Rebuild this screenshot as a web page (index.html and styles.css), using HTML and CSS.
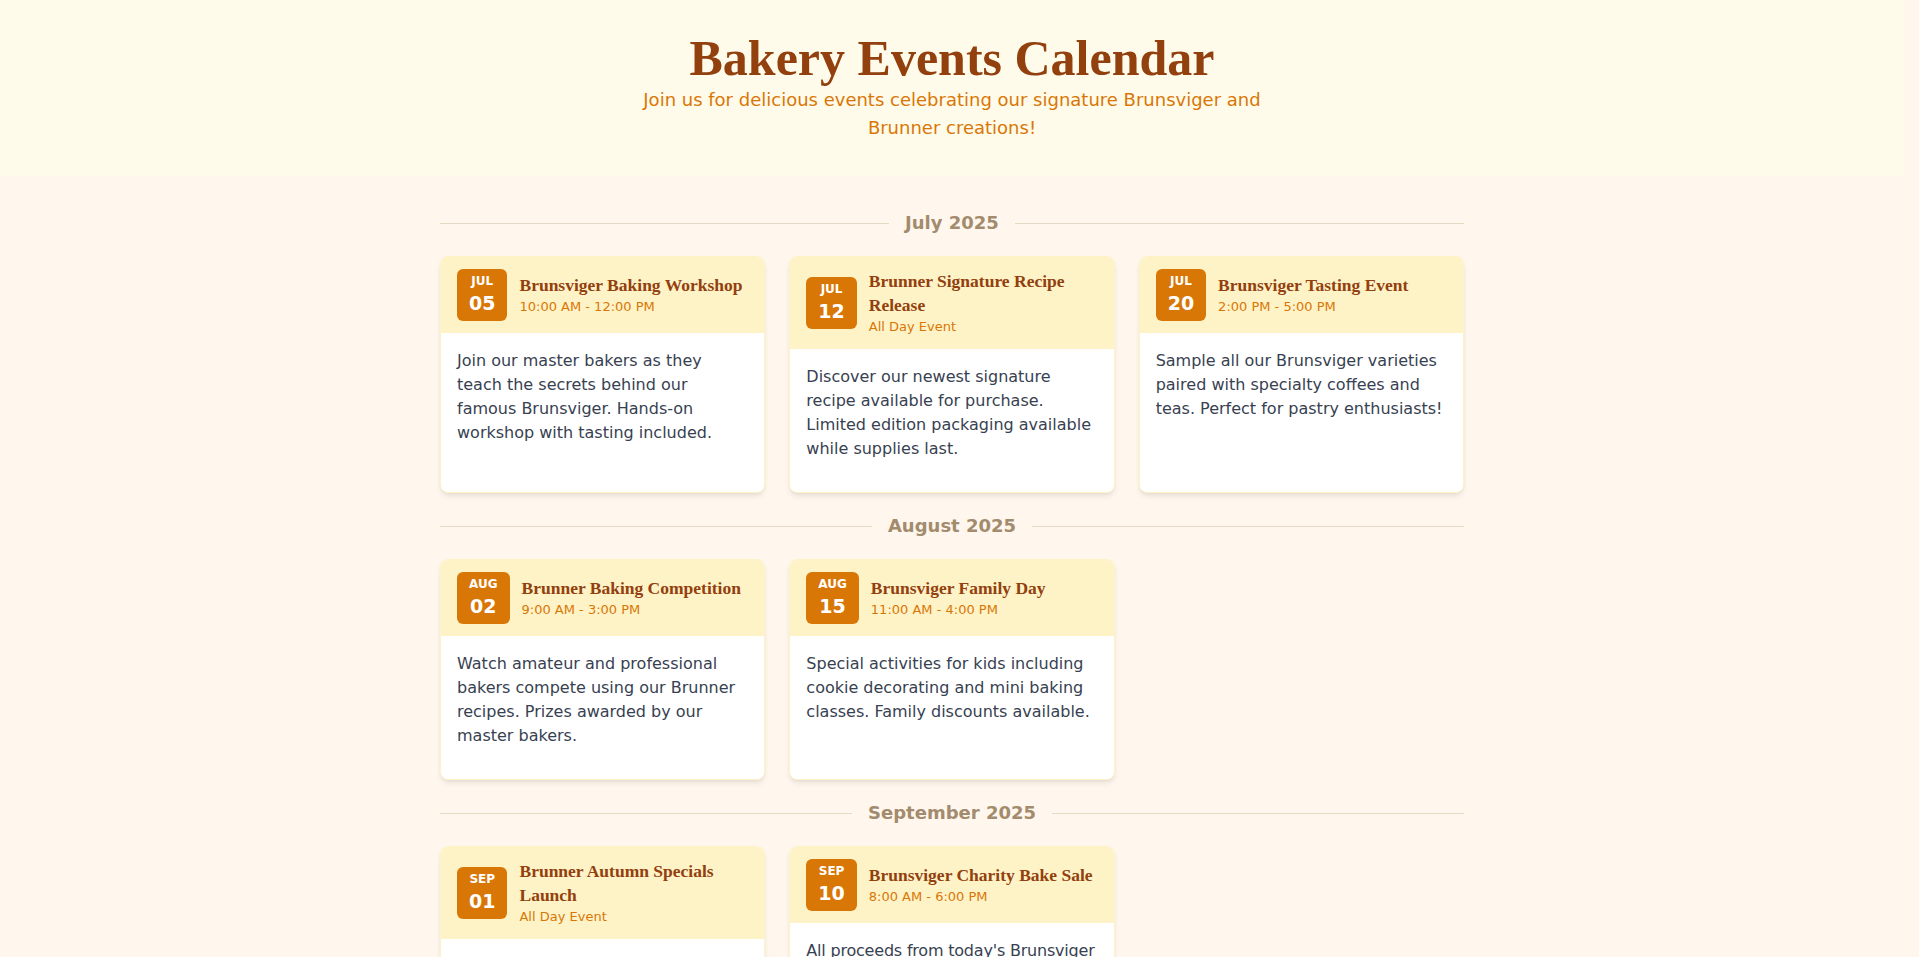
FILE: index.html
```html
<!DOCTYPE html>
<html lang="en">
<head>
<meta charset="utf-8">
<title>Bakery Events Calendar</title>
<link rel="stylesheet" href="styles.css">
</head>
<body>
<header class="hero">
  <h1 class="hero-title">Bakery Events Calendar</h1>
  <p class="hero-sub">Join us for delicious events celebrating our signature Brunsviger and Brunner creations!</p>
</header>
<main class="calendar">
  <section class="month">
    <h2 class="month-head"><span class="month-line"></span><span class="month-name">July 2025</span><span class="month-line"></span></h2>
    <div class="grid">
      <article class="card">
        <div class="card-head">
          <div class="badge"><span class="badge-mon">JUL</span><span class="badge-day">05</span></div>
          <div class="card-info"><h3 class="card-title">Brunsviger Baking Workshop</h3><p class="card-time">10:00 AM - 12:00 PM</p></div>
        </div>
        <div class="card-body"><p>Join our master bakers as they teach the secrets behind our famous Brunsviger. Hands-on workshop with tasting included.</p></div>
      </article>
      <article class="card">
        <div class="card-head">
          <div class="badge"><span class="badge-mon">JUL</span><span class="badge-day">12</span></div>
          <div class="card-info"><h3 class="card-title">Brunner Signature Recipe Release</h3><p class="card-time">All Day Event</p></div>
        </div>
        <div class="card-body"><p>Discover our newest signature recipe available for purchase. Limited edition packaging available while supplies last.</p></div>
      </article>
      <article class="card">
        <div class="card-head">
          <div class="badge"><span class="badge-mon">JUL</span><span class="badge-day">20</span></div>
          <div class="card-info"><h3 class="card-title">Brunsviger Tasting Event</h3><p class="card-time">2:00 PM - 5:00 PM</p></div>
        </div>
        <div class="card-body"><p>Sample all our Brunsviger varieties paired with specialty coffees and teas. Perfect for pastry enthusiasts!</p></div>
      </article>
    </div>
  </section>

  <section class="month">
    <h2 class="month-head"><span class="month-line"></span><span class="month-name">August 2025</span><span class="month-line"></span></h2>
    <div class="grid">
      <article class="card">
        <div class="card-head">
          <div class="badge"><span class="badge-mon">AUG</span><span class="badge-day">02</span></div>
          <div class="card-info"><h3 class="card-title">Brunner Baking Competition</h3><p class="card-time">9:00 AM - 3:00 PM</p></div>
        </div>
        <div class="card-body"><p>Watch amateur and professional bakers compete using our Brunner recipes. Prizes awarded by our master bakers.</p></div>
      </article>
      <article class="card">
        <div class="card-head">
          <div class="badge"><span class="badge-mon">AUG</span><span class="badge-day">15</span></div>
          <div class="card-info"><h3 class="card-title">Brunsviger Family Day</h3><p class="card-time">11:00 AM - 4:00 PM</p></div>
        </div>
        <div class="card-body"><p>Special activities for kids including cookie decorating and mini baking classes. Family discounts available.</p></div>
      </article>
    </div>
  </section>

  <section class="month">
    <h2 class="month-head"><span class="month-line"></span><span class="month-name">September 2025</span><span class="month-line"></span></h2>
    <div class="grid">
      <article class="card">
        <div class="card-head">
          <div class="badge"><span class="badge-mon">SEP</span><span class="badge-day">01</span></div>
          <div class="card-info"><h3 class="card-title">Brunner Autumn Specials Launch</h3><p class="card-time">All Day Event</p></div>
        </div>
        <div class="card-body"><p>Be the first to taste our seasonal Brunner flavors, featuring apple cinnamon and spiced pumpkin varieties.</p></div>
      </article>
      <article class="card">
        <div class="card-head">
          <div class="badge"><span class="badge-mon">SEP</span><span class="badge-day">10</span></div>
          <div class="card-info"><h3 class="card-title">Brunsviger Charity Bake Sale</h3><p class="card-time">8:00 AM - 6:00 PM</p></div>
        </div>
        <div class="card-body"><p class="tight">All proceeds from today's Brunsviger sales go to the local food bank. Come support a great cause!</p></div>
      </article>
    </div>
  </section>
</main>
</body>
</html>
```

FILE: styles.css
```css
* {
  box-sizing: border-box;
  margin: 0;
  padding: 0;
}

body {
  background: #fff7ed;
  font-family: "DejaVu Sans", "Noto Sans", sans-serif;
  color: #374151;
  padding-right: 15px;
}

.hero {
  background: #fffbeb;
  padding: 34px 16px;
  text-align: center;
}

.hero-title {
  font-family: "Liberation Serif", serif;
  font-weight: 700;
  font-size: 50px;
  line-height: 48px;
  color: #92400e;
  margin-bottom: 4px;
}

.hero-sub {
  max-width: 672px;
  margin: 0 auto;
  font-size: 18px;
  line-height: 28px;
  color: #d97706;
}

.calendar {
  max-width: 1024px;
  margin: 0 auto;
  padding: 33px 0 48px;
}

.month {
  margin-bottom: 19px;
}

.month-head {
  display: flex;
  align-items: center;
  height: 28px;
  margin-bottom: 19px;
  font-size: 18px;
  font-weight: 700;
  line-height: 28px;
  color: #a38b6e;
}

.month-line {
  flex: 1;
  height: 1px;
  background: #e6dac4;
}

.month-name {
  padding: 0 16px;
}

.grid {
  display: grid;
  grid-template-columns: repeat(3, 1fr);
  gap: 24px;
}

.card {
  background: #ffffff;
  border: 1px solid #fef3c7;
  border-radius: 8px;
  overflow: hidden;
  box-shadow: 0 4px 6px -1px rgba(0, 0, 0, 0.08), 0 2px 4px -2px rgba(0, 0, 0, 0.08);
  display: flex;
  flex-direction: column;
}

.card-head {
  background: #fef3c7;
  padding: 12px 16px;
  display: flex;
  align-items: center;
  gap: 12px;
}

.badge {
  flex-shrink: 0;
  background: #d97706;
  color: #ffffff;
  border-radius: 6px;
  padding: 4px 12px;
  display: flex;
  flex-direction: column;
  align-items: center;
  font-weight: 700;
}

.badge-mon {
  font-size: 12px;
  line-height: 16px;
}

.badge-day {
  font-size: 19px;
  line-height: 28px;
}

.card-title {
  font-family: "Liberation Serif", serif;
  font-size: 17.5px;
  line-height: 24px;
  font-weight: 700;
  color: #92400e;
}

.card-time {
  font-size: 13px;
  line-height: 20px;
  color: #d97706;
}

.card-body {
  flex: 1;
  padding: 16px 16px 31px;
  font-size: 16px;
  line-height: 24px;
}

.tight {
  letter-spacing: -0.2px;
}
```
